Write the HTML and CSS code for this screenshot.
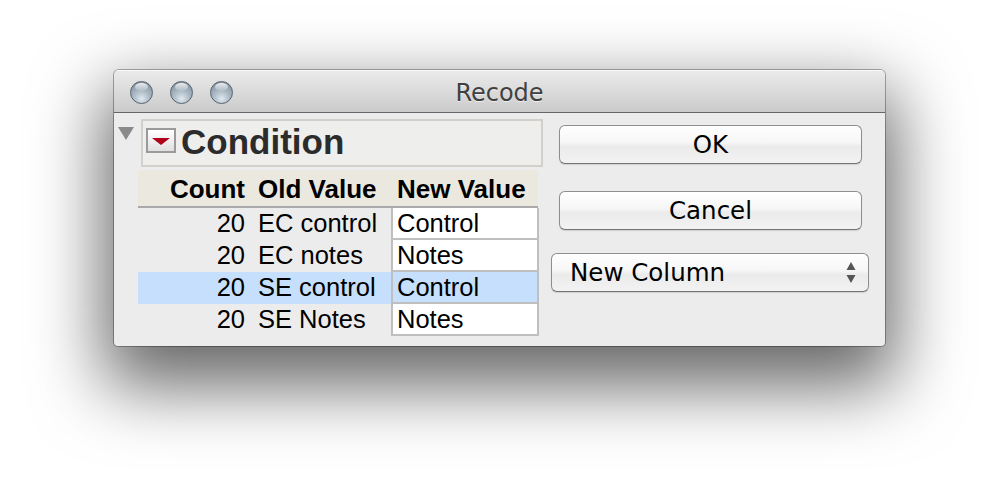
FILE: index.html
```html
<!DOCTYPE html>
<html>
<head>
<meta charset="utf-8">
<link rel="stylesheet" href="styles.css">
</head>
<body>
<div class="window">
  <div class="titlebar">
    <div class="lights"><span class="light"></span><span class="light"></span><span class="light"></span></div>
    <div class="title">Recode</div>
    <div></div>
  </div>
  <div class="content">
    <div class="left">
      <div class="cond-row">
        <span class="disclosure"></span>
        <div class="cond-box">
          <span class="menu-icon"><span class="red-tri"></span></span>
          <span class="cond-title">Condition</span>
        </div>
      </div>
      <div class="table">
        <div class="row head">
          <div class="c-count">Count</div>
          <div class="c-old">Old Value</div>
          <div class="c-new">New Value</div>
        </div>
        <div class="row">
          <div class="c-count">20</div>
          <div class="c-old">EC control</div>
          <div class="c-new cell">Control</div>
        </div>
        <div class="row">
          <div class="c-count">20</div>
          <div class="c-old">EC notes</div>
          <div class="c-new cell">Notes</div>
        </div>
        <div class="row selected">
          <div class="c-count">20</div>
          <div class="c-old">SE control</div>
          <div class="c-new cell">Control</div>
        </div>
        <div class="row">
          <div class="c-count">20</div>
          <div class="c-old">SE Notes</div>
          <div class="c-new cell">Notes</div>
        </div>
      </div>
    </div>
    <div class="right">
      <div class="btn btn-ok">OK</div>
      <div class="btn btn-cancel">Cancel</div>
      <div class="select">
        <span class="select-text">New Column</span>
        <svg class="arrows" width="10" height="22" viewBox="0 0 10 22">
          <polygon points="5,0 9.5,8 0.5,8" fill="#555"/>
          <polygon points="0.5,13 9.5,13 5,21" fill="#555"/>
        </svg>
      </div>
    </div>
  </div>
</div>
</body>
</html>
```

FILE: styles.css
```css
html, body {
  margin: 0;
  padding: 0;
  background: #ffffff;
}
body {
  font-family: "Liberation Sans", Arial, sans-serif;
  width: 998px;
  height: 504px;
  overflow: hidden;
}
.window {
  margin: 70px 0 0 114px;
  width: 771px;
  height: 276px;
  background: #ececec;
  border-radius: 5px 5px 4px 4px;
  box-shadow: 0 0 0 1px rgba(0,0,0,0.3), 0 30px 70px 10px rgba(0,0,0,0.6);
  overflow: hidden;
}
.titlebar {
  height: 42px;
  border-bottom: 1px solid #666666;
  background: linear-gradient(#ebebeb, #cbcbcb);
  box-shadow: inset 0 1px 0 rgba(255,255,255,0.7);
  display: grid;
  grid-template-columns: 1fr auto 1fr;
  align-items: center;
}
.lights {
  display: flex;
  gap: 17px;
  padding-left: 16px;
  padding-top: 1px;
}
.light {
  width: 23px;
  height: 23px;
  box-sizing: border-box;
  border-radius: 50%;
  border: 1px solid #57636d;
  background: radial-gradient(circle at 50% 80%, #dfe8ef 0%, #a7b6c2 45%, #738592 100%);
  position: relative;
}
.light::after {
  content: "";
  position: absolute;
  left: 4px;
  top: 1px;
  width: 13px;
  height: 8px;
  border-radius: 50%;
  background: linear-gradient(rgba(255,255,255,0.85), rgba(255,255,255,0.1));
}
.title {
  font-family: "DejaVu Sans", sans-serif;
  font-size: 24px;
  line-height: 42px;
  padding-top: 2px;
  color: #404040;
  text-shadow: 0 1px 0 rgba(255,255,255,0.6);
}
.content {
  display: flex;
  padding: 6px 0 0 4px;
}
.left {
  width: 425px;
}
.cond-row {
  display: flex;
}
.disclosure {
  flex: none;
  width: 0;
  height: 0;
  border-left: 8px solid transparent;
  border-right: 8px solid transparent;
  border-top: 13px solid #8a8a8a;
  margin: 8px 7px 0 0;
}
.cond-box {
  width: 402px;
  height: 48px;
  box-sizing: border-box;
  border: 2px solid #d3cfcb;
  background: #eeeeed;
  display: flex;
  align-items: flex-start;
  padding-left: 3px;
}
.menu-icon {
  flex: none;
  width: 30px;
  height: 25px;
  box-sizing: border-box;
  border: 2px solid #9a9a9a;
  background: linear-gradient(#ffffff, #e0e0e0);
  margin-top: 7px;
  display: flex;
  align-items: center;
  justify-content: center;
}
.red-tri {
  width: 0;
  height: 0;
  border-left: 9px solid transparent;
  border-right: 9px solid transparent;
  border-top: 7px solid #b0001a;
  margin-top: 1px;
}
.cond-title {
  margin-left: 5px;
  margin-top: 2px;
  font-weight: bold;
  font-size: 35px;
  line-height: 38px;
  color: #2b2b2b;
}
.table {
  margin: 3px 0 0 20px;
  width: 401px;
}
.row {
  display: grid;
  grid-template-columns: 113px 140px 148px;
  height: 32px;
  font-size: 25.5px;
  line-height: 30px;
  color: #000;
}
.row.head {
  box-sizing: border-box;
  padding-top: 2px;
  line-height: 34px;
  font-weight: bold;
  font-size: 26px;
  background: #ebe8e0;
  border-bottom: 2px solid #a9a9a9;
  height: 38px;
  width: 400px;
}
.row.selected {
  background: #c5dffc;
}
.c-count {
  text-align: right;
  padding-right: 6px;
}
.c-old {
  padding-left: 7px;
  white-space: nowrap;
}
.c-new {
  padding-left: 6px;
  white-space: nowrap;
}
.cell {
  box-sizing: border-box;
  height: 32px;
  border: 2px solid #bfbfbf;
  border-top: none;
  padding-left: 4px;
  background: #ffffff;
}
.row.selected .cell {
  background: #c5dffc;
}
.right {
  margin-left: 8px;
  width: 318px;
  display: flex;
  flex-direction: column;
  font-family: "DejaVu Sans", sans-serif;
  font-size: 24.5px;
  color: #000;
}
.btn {
  width: 303px;
  height: 39px;
  box-sizing: border-box;
  margin-left: 8px;
  border: 1px solid #8e8e8e;
  border-bottom-color: #747474;
  border-radius: 6px;
  background: linear-gradient(#ffffff 0%, #f6f6f6 45%, #ebebeb 55%, #f2f2f2 100%);
  box-shadow: 0 1px 1px rgba(0,0,0,0.12);
  text-align: center;
  line-height: 37px;
}
.btn-ok {
  margin-top: 6px;
}
.btn-cancel {
  margin-top: 27px;
}
.select {
  margin-top: 23px;
  width: 318px;
  height: 39px;
  box-sizing: border-box;
  border: 1px solid #8e8e8e;
  border-bottom-color: #747474;
  border-radius: 6px;
  background: linear-gradient(#ffffff 0%, #f6f6f6 45%, #ebebeb 55%, #f2f2f2 100%);
  box-shadow: 0 1px 1px rgba(0,0,0,0.12);
  display: flex;
  align-items: center;
  justify-content: space-between;
  padding: 0 12px 0 18px;
}
.select-text {
  line-height: 37px;
}
.arrows {
  display: block;
}
```
